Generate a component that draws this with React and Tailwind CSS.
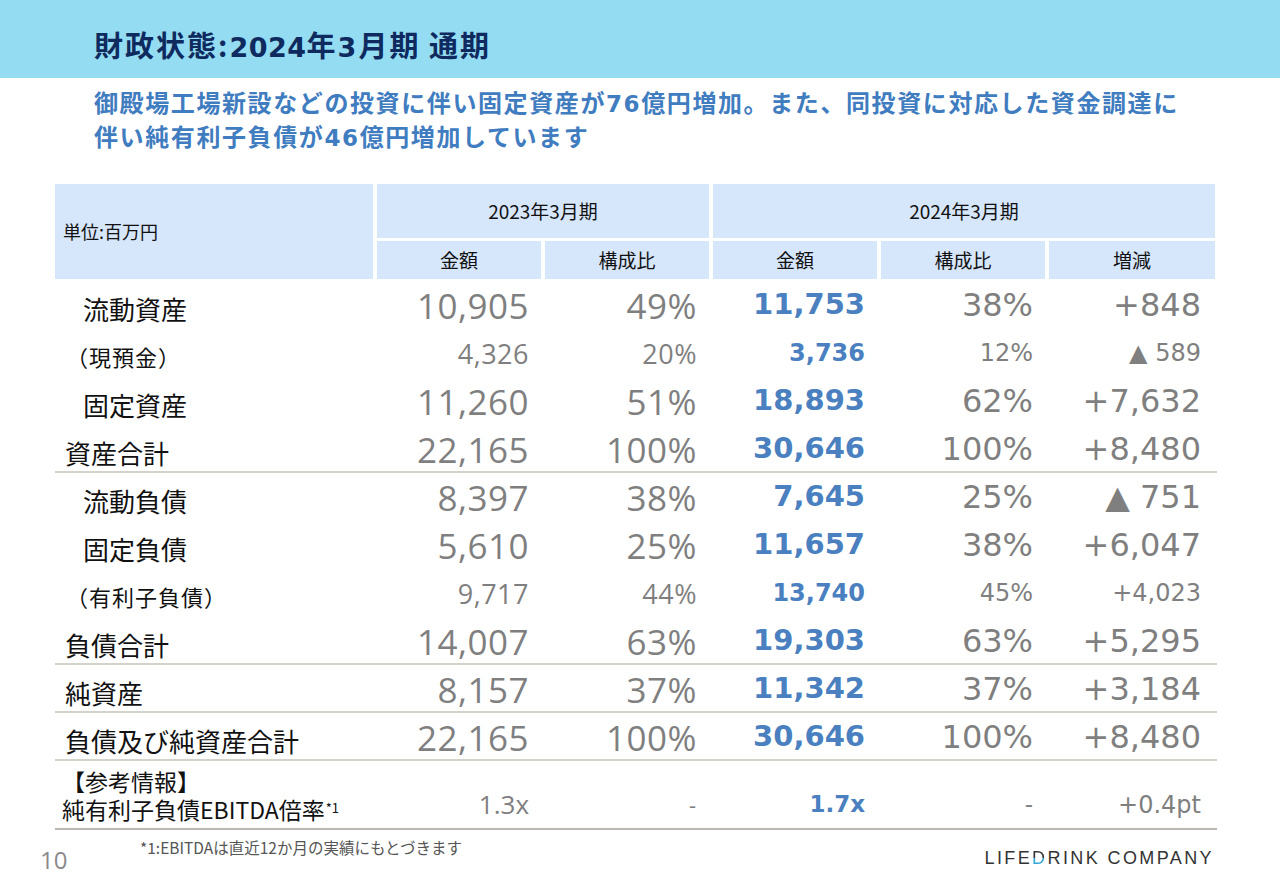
import React from "react";

const JP = "font-[family-name:'Noto_Sans_CJK_JP','Noto_Sans',sans-serif]";
const WIDE = "font-[family-name:'DejaVu_Sans','Noto_Sans_CJK_JP',sans-serif]";
const OPEN = "font-[family-name:'Open_Sans','Noto_Sans_CJK_JP',sans-serif]";
const cols = "grid grid-cols-[318px_164px_164px_164px_164px_166px] gap-x-[4px]";

const rows = [
  { label: "流動資産", v: ["10,905", "49%", "11,753", "38%", "+848"] },
  { label: "（現預金）", small: true, v: ["4,326", "20%", "3,736", "12%", "▲ 589"] },
  { label: "固定資産", v: ["11,260", "51%", "18,893", "62%", "+7,632"] },
  { label: "資産合計", total: true, v: ["22,165", "100%", "30,646", "100%", "+8,480"], line: true },
  { label: "流動負債", v: ["8,397", "38%", "7,645", "25%", "▲ 751"] },
  { label: "固定負債", v: ["5,610", "25%", "11,657", "38%", "+6,047"] },
  { label: "（有利子負債）", small: true, v: ["9,717", "44%", "13,740", "45%", "+4,023"] },
  { label: "負債合計", total: true, v: ["14,007", "63%", "19,303", "63%", "+5,295"], line: true },
  { label: "純資産", total: true, v: ["8,157", "37%", "11,342", "37%", "+3,184"], line: true },
  { label: "負債及び純資産合計", total: true, v: ["22,165", "100%", "30,646", "100%", "+8,480"], line: true },
];

function Row({ r }) {
  const big = !r.small;
  const label = big
    ? "text-[26px] " + (r.total ? "pl-[10px]" : "pl-[28px]")
    : "text-[22px] tracking-[1px] pl-[11px]";
  const numOld = big ? "text-[35px]" : "text-[27px]";
  const amtNew = big ? "text-[29px]" : "text-[24px]";
  const numNew = big ? "text-[32px]" : "text-[24px]";
  return (
    <div className={cols + " h-[48px] items-center " + (r.line ? "border-b-2 border-[#d3d3cc]" : "")}>
      <div className={label + " text-[#111] pt-[6px]"}>{r.label}</div>
      <div className={numOld + " " + OPEN + " tracking-[0.5px] pr-[12px] text-right text-[#7f7f7f] leading-none"}>{r.v[0]}</div>
      <div className={numOld + " " + OPEN + " tracking-[0.5px] pr-[12px] text-right text-[#7f7f7f] leading-none"}>{r.v[1]}</div>
      <div className={amtNew + " " + WIDE + " text-right pr-[12px] text-[#4a7fc0] font-bold"}>{r.v[2]}</div>
      <div className={numNew + " " + WIDE + " text-right pr-[12px] text-[#7f7f7f]"}>{r.v[3]}</div>
      <div className={numNew + " " + WIDE + " text-right pr-[14px] text-[#7f7f7f]"}>{r.v[4]}</div>
    </div>
  );
}

export default function App() {
  return (
    <div className={"w-[1280px] h-[886px] bg-white overflow-hidden flex flex-col " + JP}>
      <div className="h-[78px] bg-[#93dcf2] flex items-center pl-[94px] pt-[14px]">
        <h1 className="text-[29px] font-bold text-[#0e2a5e] tracking-[2px]">
          財政状態:<span className={WIDE + " text-[27px] tracking-[0.5px]"}>2024</span>年
          <span className={WIDE + " text-[27px]"}>3</span>月期 通期
        </h1>
      </div>

      <p className="pl-[94px] pt-[8px] text-[24px] leading-[31px] font-bold text-[#3f7cc0] tracking-[1.6px]">
        御殿場工場新設などの投資に伴い固定資産が<span className={WIDE + " text-[23px]"}>76</span>億円増加。また、同投資に対応した資金調達に
        <br />
        伴い純有利子負債が<span className={WIDE + " text-[23px]"}>46</span>億円増加しています
      </p>

      <div className="ml-[55px] w-[1162px] mt-[30px]">
        <div className={cols + " grid-rows-[54px_38px] gap-y-[3px] text-[19px] text-[#111]"}>
          <div className="row-span-2 bg-[#d6e6fb] flex items-center pl-[8px] text-[18px]">単位:百万円</div>
          <div className="col-span-2 bg-[#d6e6fb] flex items-center justify-center">2023年3月期</div>
          <div className="col-span-3 bg-[#d6e6fb] flex items-center justify-center">2024年3月期</div>
          {["金額", "構成比", "金額", "構成比", "増減"].map((t, i) => (
            <div key={i} className="bg-[#d6e6fb] flex items-center justify-center">{t}</div>
          ))}
        </div>

        <div className="mt-[2px] flex flex-col">
          {rows.map((r, i) => (
            <Row key={i} r={r} />
          ))}
          <div className={cols + " h-[69px] items-center border-b-2 border-[#bdb8b2]"}>
            <div className="pl-[7px] text-[23px] text-[#111] pt-[2px] whitespace-nowrap flex flex-col">
              <span className="h-[27px] leading-[27px]">【参考情報】</span>
              <span className="h-[28px] leading-[28px]">
                純有利子負債EBITDA倍率<sup className="text-[13px] ml-[1px]">*1</sup>
              </span>
            </div>
            <div className={OPEN + " text-[26px] text-right pr-[12px] text-[#7f7f7f] pt-[20px]"}>1.3x</div>
            <div className={OPEN + " text-[22px] text-right pr-[13px] text-[#7f7f7f] pt-[20px]"}>-</div>
            <div className={WIDE + " text-[23px] text-right pr-[12px] text-[#4a7fc0] font-bold pt-[20px]"}>1.7x</div>
            <div className={WIDE + " text-[23px] text-right pr-[12px] text-[#7f7f7f] pt-[20px]"}>-</div>
            <div className={WIDE + " text-[24px] text-right pr-[14px] text-[#7f7f7f] pt-[20px]"}>+0.4pt</div>
          </div>
        </div>
      </div>

      <div className="flex items-start mt-[6px]">
        <div className={OPEN + " w-[140px] pl-[40px] pt-[6px] text-[24px] text-[#8a8a8a]"}>10</div>
        <div className="text-[15.5px] text-[#555]">*1:EBITDAは直近12か月の実績にもとづきます</div>
        <div className="ml-auto mr-[66px] mt-[9px] text-[18px] tracking-[2.4px] text-[#333] font-[family-name:'Liberation_Sans',sans-serif]">
          LIFE
          <span className="bg-[linear-gradient(to_bottom,#333_50%,#2fa8d8_50%)] bg-clip-text text-transparent">D</span>
          RINK COMPANY
        </div>
      </div>
    </div>
  );
}
